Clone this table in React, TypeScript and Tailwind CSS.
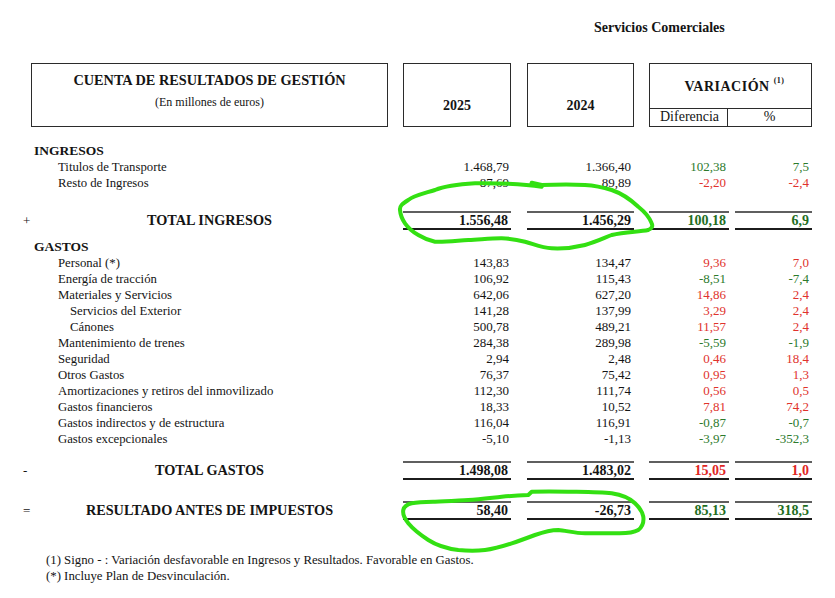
import React from "react";

type Tone = "g" | "r";

type Row = {
  label: string;
  indent: 0 | 1 | 2;
  bold?: boolean;
  v25?: string;
  v24?: string;
  dif?: string;
  pct?: string;
  tone?: Tone;
};

const ingresos: Row[] = [
  { label: "Titulos de Transporte", indent: 1, v25: "1.468,79", v24: "1.366,40", dif: "102,38", pct: "7,5", tone: "g" },
  { label: "Resto de Ingresos", indent: 1, v25: "87,69", v24: "89,89", dif: "-2,20", pct: "-2,4", tone: "r" },
];

const gastos: Row[] = [
  { label: "Personal (*)", indent: 1, v25: "143,83", v24: "134,47", dif: "9,36", pct: "7,0", tone: "r" },
  { label: "Energía de tracción", indent: 1, v25: "106,92", v24: "115,43", dif: "-8,51", pct: "-7,4", tone: "g" },
  { label: "Materiales y Servicios", indent: 1, v25: "642,06", v24: "627,20", dif: "14,86", pct: "2,4", tone: "r" },
  { label: "Servicios del Exterior", indent: 2, v25: "141,28", v24: "137,99", dif: "3,29", pct: "2,4", tone: "r" },
  { label: "Cánones", indent: 2, v25: "500,78", v24: "489,21", dif: "11,57", pct: "2,4", tone: "r" },
  { label: "Mantenimiento de trenes", indent: 1, v25: "284,38", v24: "289,98", dif: "-5,59", pct: "-1,9", tone: "g" },
  { label: "Seguridad", indent: 1, v25: "2,94", v24: "2,48", dif: "0,46", pct: "18,4", tone: "r" },
  { label: "Otros Gastos", indent: 1, v25: "76,37", v24: "75,42", dif: "0,95", pct: "1,3", tone: "r" },
  { label: "Amortizaciones y retiros del inmovilizado", indent: 1, v25: "112,30", v24: "111,74", dif: "0,56", pct: "0,5", tone: "r" },
  { label: "Gastos financieros", indent: 1, v25: "18,33", v24: "10,52", dif: "7,81", pct: "74,2", tone: "r" },
  { label: "Gastos indirectos y de estructura", indent: 1, v25: "116,04", v24: "116,91", dif: "-0,87", pct: "-0,7", tone: "g" },
  { label: "Gastos excepcionales", indent: 1, v25: "-5,10", v24: "-1,13", dif: "-3,97", pct: "-352,3", tone: "g" },
];

// same column template everywhere: label | 2025 | gap | 2024 | gap | diferencia | gap | %
const COLS = "grid grid-cols-[403px_108px_16px_107px_15px_80px_6px_77px]";

function toneText(t?: Tone) {
  if (t === "g") return "text-[#2c7a2c]";
  if (t === "r") return "text-[#e0322c]";
  return "";
}

function DataRow({ row }: { row: Row }) {
  const pad = row.indent === 0 ? "pl-[34px]" : row.indent === 1 ? "pl-[58px]" : "pl-[70px]";
  return (
    <div className={`${COLS} h-4 items-center text-[13px] leading-4`}>
      <div className={`${pad} text-[12.75px]`}>{row.label}</div>
      <div className="pr-[2px] text-right">{row.v25}</div>
      <div />
      <div className="pr-[3px] text-right">{row.v24}</div>
      <div />
      <div className={`pr-[3px] text-right ${toneText(row.tone)}`}>{row.dif}</div>
      <div />
      <div className={`pr-[3px] text-right ${toneText(row.tone)}`}>{row.pct}</div>
    </div>
  );
}

function SectionHead({ text }: { text: string }) {
  return (
    <div className="h-4 pl-[34px] text-[13.5px] font-bold leading-4">{text}</div>
  );
}

function TotalRow(props: {
  sign: string;
  label: string;
  v25: string;
  v24: string;
  dif: string;
  pct: string;
  tone: Tone;
}) {
  const cell = "border-t-2 border-b-2 border-t-[#5f5f5f] border-b-[#1c1c1c] h-[19px] pt-[1px] pr-[3px] text-right text-[14px] font-bold leading-[14px]";
  const tone = props.tone === "g" ? "text-[#1f6e1f]" : "text-[#e0261f]";
  return (
    <div className={`${COLS} h-[19px]`}>
      <div className="flex h-[19px] items-center text-[13px] leading-[19px]">
        <span className="w-[31px] pl-[23px]">{props.sign}</span>
        <span className="w-[357px] text-center text-[14.25px] font-bold">{props.label}</span>
      </div>
      <div className={`${cell} pr-[2px]`}>{props.v25}</div>
      <div />
      <div className={cell}>{props.v24}</div>
      <div />
      <div className={`${cell} ${tone}`}>{props.dif}</div>
      <div />
      <div className={`${cell} ${tone}`}>{props.pct}</div>
    </div>
  );
}

function Scribbles() {
  const top =
    "M531.7 182.7 L541.7 186.7 C525 184 500 183 475 183.3 C455 184.5 445 186 435 190 C422 194 413 196 408.3 200 C402 204 399.5 206 400 210 C400.5 216 402 219 405 223.3 C409 229 413 232 418.3 235 C424 238.5 429 240.5 435 241.7 C448 242 458 240.5 468.3 240 C482 239.3 492 238.2 501.7 238.3 C511 238.6 518 239.8 525 241.7 C535 244.5 542 247.8 551.7 248.3 C565 249 575 247.5 585 245 C596 242 604 238 611.7 235 C625 231.5 638 232 648.3 230 C652 228.5 653 226 651.7 223.3 C649 216 645 212 638.3 206.7 C630 199 622 193.5 611.7 190 C602 187 594 185.5 585 185 C570 184.3 556 184.6 541.7 185 L531.7 182.7";
  const bottom =
    "M528.3 495 L531.7 491.7 C545 491.3 556 491.4 568.3 491.7 C585 492 600 492 611.7 493.3 C623 495 630 498.5 635 503.3 C640 508 642.5 512 643.3 516.7 C644 522 642 527 638.3 530 C633 533 626 533.4 618.3 533.3 C607 533.2 596 533.4 585 533.3 C575 533.2 566 530.6 558.3 530 C549 530 542 532.5 535 535 C527 538 519 541 511.7 543.3 C502 546.5 494 548.8 485 550 C476 551 467 550.8 458.3 550 C446 548.5 436 545 428.3 540 C419 534 413 529 408.3 523.3 C404 518 402.5 514 403.3 510 C404 506.5 407 504.5 411.7 503.3 C419 502 427 501.9 435 501.7 C446 501.3 457 500.6 468.3 500 C480 499.2 491 497.8 501.7 496.7 C511 495.8 520 495.3 528.3 495";
  return (
    <svg className="pointer-events-none absolute left-0 top-0" width="835" height="598" viewBox="0 0 835 598">
      <g fill="none" stroke="#33e012" strokeWidth="4" strokeLinecap="round" strokeLinejoin="round">
        <path d={top} />
        <path d={bottom} />
      </g>
    </svg>
  );
}

export default function App() {
  return (
    <div className="relative h-[598px] w-[835px] overflow-hidden bg-white font-['Liberation_Serif',_'Times_New_Roman',_serif] text-[#141414]">
      <div className="h-[63px] pl-[594px] pt-[20px] text-[14px] font-bold leading-4">Servicios Comerciales</div>

      {/* header boxes */}
      <div className={`${COLS} h-[64px]`}>
        <div className="pl-[31px]">
          <div className="flex h-[64px] w-[357px] flex-col items-center border-[1.5px] border-[#2b2b2b] pt-[7px]">
            <div className="text-[14.3px] font-bold leading-[18px]">CUENTA DE RESULTADOS DE GESTIÓN</div>
            <div className="mt-[6px] text-[12px] leading-[14px]">(En millones de euros)</div>
          </div>
        </div>
        <div className="border-[1.5px] border-[#2b2b2b] pt-[33px] text-center text-[14px] font-bold leading-[18px]">2025</div>
        <div />
        <div className="border-[1.5px] border-[#2b2b2b] pt-[33px] text-center text-[14px] font-bold leading-[18px]">2024</div>
        <div />
        <div className="col-span-3 flex flex-col border-[1.5px] border-[#2b2b2b]">
          <div className="flex flex-1 items-center justify-center pl-[8px] text-[14px] font-bold tracking-[0.5px]">
            VARIACIÓN
            <sup className="ml-[4px] -translate-y-[1px] text-[8px] font-bold">(1)</sup>
          </div>
          <div className="grid h-[18px] grid-cols-[78px_1fr] border-t-[1.5px] border-[#2b2b2b] text-[14px] leading-[16px]">
            <div className="border-r-[1.5px] border-[#2b2b2b] pl-[10px]">Diferencia</div>
            <div className="text-center">%</div>
          </div>
        </div>
      </div>

      <div className="mt-[16px]">
        <SectionHead text="INGRESOS" />
        {ingresos.map((r) => (
          <DataRow key={r.label} row={r} />
        ))}
      </div>

      <div className="mt-[20px]">
        <TotalRow sign="+" label="TOTAL INGRESOS" v25="1.556,48" v24="1.456,29" dif="100,18" pct="6,9" tone="g" />
      </div>

      <div className="mt-[9px]">
        <SectionHead text="GASTOS" />
        {gastos.map((r) => (
          <DataRow key={r.label} row={r} />
        ))}
      </div>

      <div className="mt-[14px]">
        <TotalRow sign="-" label="TOTAL GASTOS" v25="1.498,08" v24="1.483,02" dif="15,05" pct="1,0" tone="r" />
      </div>

      <div className="mt-[21px]">
        <TotalRow sign="=" label="RESULTADO ANTES DE IMPUESTOS" v25="58,40" v24="-26,73" dif="85,13" pct="318,5" tone="g" />
      </div>

      <div className="mt-[32px] pl-[46px] text-[12.8px] leading-4">
        <div>(1) Signo - : Variación desfavorable en Ingresos y Resultados. Favorable en Gastos.</div>
        <div>(*) Incluye Plan de Desvinculación.</div>
      </div>

      <Scribbles />
    </div>
  );
}
